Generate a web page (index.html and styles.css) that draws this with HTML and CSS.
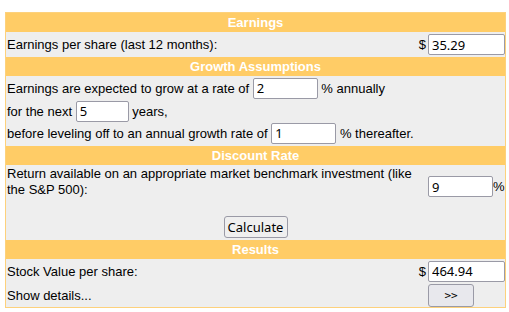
FILE: index.html
```html
<!DOCTYPE html>
<html lang="en">
<head>
    <meta charset="UTF-8">
    <title>Stock Value Calculator</title>
    <link rel="stylesheet" href="styles.css">
</head>
<body>

<div class="calc">
    <div class="head">Earnings</div>
    <div class="row h25">
        <span class="label">Earnings per share (last 12 months):</span>
        <span class="cur">$</span>
        <span class="cell"><input class="val" type="text" value="35.29"></span>
    </div>

    <div class="head">Growth Assumptions</div>
    <div class="line h24">Earnings are expected to grow at a rate of <input class="num" type="text" value="2"> % annually</div>
    <div class="line h22">for the next <input class="yrs" type="text" value="5"> years,</div>
    <div class="line h22 last">before leveling off to an annual growth rate of <input class="num" type="text" value="1"> % thereafter.</div>

    <div class="head">Discount Rate</div>
    <div class="row h43">
        <span class="label wrap">Return available on an appropriate market benchmark investment (like the S&amp;P 500):</span>
        <span class="cur"></span>
        <span class="cell"><input class="num" type="text" value="9">%</span>
    </div>

    <div class="actions">
        <button class="btn" id="calcBtn">Calculate</button>
    </div>

    <div class="head">Results</div>
    <div class="row h24">
        <span class="label">Stock Value per share:</span>
        <span class="cur">$</span>
        <span class="cell"><input class="val" type="text" value="464.94"></span>
    </div>
    <div class="row h24">
        <span class="label">Show details...</span>
        <span class="cur"></span>
        <span class="cell"><button class="more">&gt;&gt;</button></span>
    </div>
</div>

</body>
</html>
```

FILE: styles.css
```css
body {
    font-family: "Liberation Sans", Arial, sans-serif;
    font-size: 13px;
    color: #000;
    background-color: #fff;
    margin: 0;
}
.calc {
    width: 499px;
    margin: 12px 0 0 5px;
    border: 1px solid #fdd17c;
    background-color: #eeeeee;
}
.head {
    height: 19px;
    line-height: 19px;
    background-color: #ffcc66;
    color: #fff;
    font-weight: bold;
    text-align: center;
}
.row {
    display: grid;
    grid-template-columns: 1fr 14px 77px;
    align-items: center;
}
.label {
    padding-left: 1px;
}
.wrap {
    line-height: 16px;
    align-self: start;
    padding-top: 1px;
}
.cur {
    text-align: right;
    padding-right: 2px;
}
.cell {
    display: flex;
    align-items: center;
}
.h22 { height: 22px; }
.h24 { height: 24px; }
.h25 { height: 25px; }
.h43 { height: 43px; }
.line {
    display: flex;
    align-items: center;
    padding-left: 1px;
    white-space: pre;
}
.line.last {
    padding-bottom: 2px;
}
input {
    box-sizing: border-box;
    height: 21px;
    margin: 0;
    padding: 1px 3px;
    border: 1px solid #9a9aa6;
    border-radius: 2px;
    background: #fff;
    font-family: "Noto Sans", sans-serif;
    font-size: 13px;
    color: #000;
}
.val { width: 77px; }
.num { width: 65px; }
.yrs { width: 53px; }
.actions {
    height: 32px;
    display: flex;
    justify-content: center;
    padding-top: 8px;
    box-sizing: border-box;
}
.btn, .more {
    box-sizing: border-box;
    margin: 0;
    border: 1px solid #9a9aa6;
    border-radius: 3px;
    font-family: "Noto Sans", sans-serif;
    font-size: 13px;
    color: #000;
}
.btn {
    width: 64px;
    height: 22px;
    padding: 0;
    background-color: #efefef;
}
.more {
    width: 46px;
    height: 23px;
    padding: 0;
    background-color: #e8e8ed;
    font-family: "DejaVu Sans Mono", monospace;
    font-size: 11px;
}
```
